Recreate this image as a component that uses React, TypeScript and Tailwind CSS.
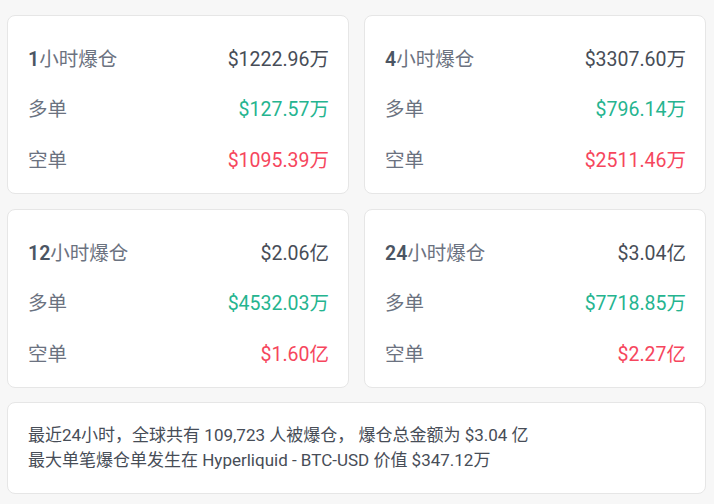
const FONT = "font-['Roboto','Noto_Sans_CJK_SC',sans-serif]";

type Stat = {
  hours: string;
  total: string;
  long: string;
  short: string;
};

const STATS: Stat[] = [
  { hours: "1", total: "$1222.96万", long: "$127.57万", short: "$1095.39万" },
  { hours: "4", total: "$3307.60万", long: "$796.14万", short: "$2511.46万" },
  { hours: "12", total: "$2.06亿", long: "$4532.03万", short: "$1.60亿" },
  { hours: "24", total: "$3.04亿", long: "$7718.85万", short: "$2.27亿" },
];

function StatCard({ stat }: { stat: Stat }) {
  return (
    <div className="flex h-[179px] flex-col gap-[21px] rounded-lg border border-[#e6e6e6] bg-white pb-[20px] pl-[20px] pr-[19px] pt-[29px]">
      <div className="flex h-[30px] items-center justify-between">
        <span className="text-[19.5px] text-[#6b7280]">
          <span className="font-semibold text-[#4b5563]">{stat.hours}</span>小时爆仓
        </span>
        <span className="text-[19.5px] text-[#474d57]">{stat.total}</span>
      </div>
      <div className="flex h-[30px] items-center justify-between">
        <span className="text-[19.5px] text-[#6b7280]">多单</span>
        <span className="text-[19.5px] text-[#25b48f]">{stat.long}</span>
      </div>
      <div className="flex h-[30px] items-center justify-between">
        <span className="text-[19.5px] text-[#6b7280]">空单</span>
        <span className="text-[19.5px] text-[#f6465d]">{stat.short}</span>
      </div>
    </div>
  );
}

export default function App() {
  return (
    <div className={`${FONT} min-h-[504px] w-[714px] bg-[#f7f7f7] pl-[7px] pr-[8px] pt-[15px]`}>
      <div className="grid grid-cols-2 gap-x-[15px] gap-y-[15px]">
        {STATS.map((stat) => (
          <StatCard key={stat.hours} stat={stat} />
        ))}
      </div>
      <div className="mt-[14px] flex h-[92px] flex-col justify-center rounded-lg border border-[#e6e6e6] bg-white pl-[20px] text-[17px] leading-[25px] text-[#474d57]">
        <p>最近24小时，全球共有 109,723 人被爆仓， 爆仓总金额为 $3.04 亿</p>
        <p>最大单笔爆仓单发生在 Hyperliquid - BTC-USD 价值 $347.12万</p>
      </div>
    </div>
  );
}
